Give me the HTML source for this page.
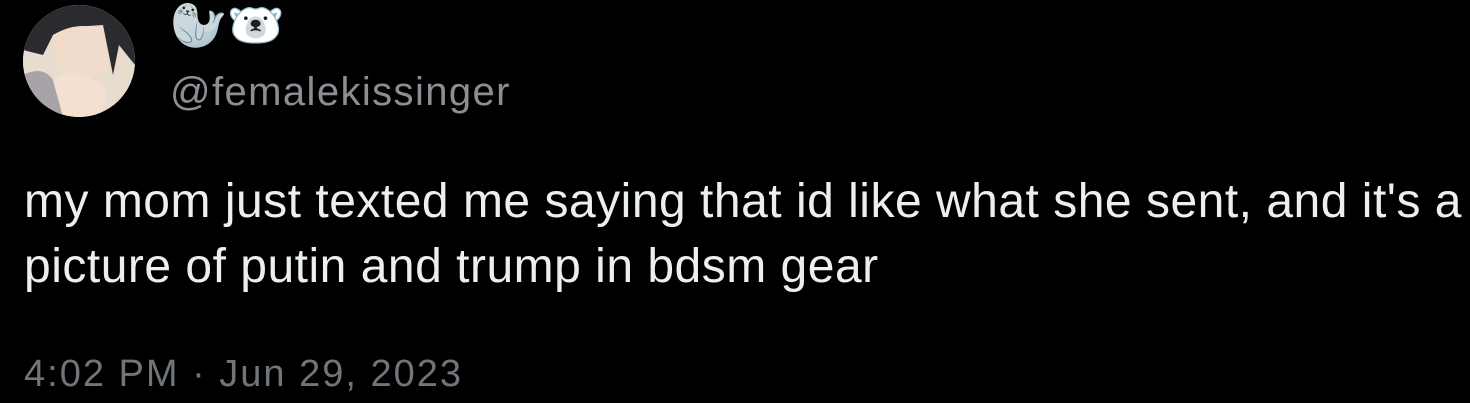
<!DOCTYPE html>
<html><head><style>
body{margin:0;width:1470px;height:403px;background:#000;overflow:hidden;font-family:"Liberation Sans",sans-serif;position:relative}
.av{position:absolute;left:23px;top:5px;width:112px;height:112px;border-radius:50%;overflow:hidden;background:#d9cfc6}
.t{position:absolute;white-space:nowrap;line-height:1.15}
</style></head><body>
<div class="av">
<svg width="112" height="112" viewBox="0 0 112 112">
<rect width="112" height="112" fill="#e8dccf"/>
<path d="M0 0H112V60L96 40 90 70 80 20 50 22 30 30 20 50 0 45Z" fill="#2b2a2e"/>
<path d="M30 30Q55 15 80 25L85 60Q70 80 50 75 30 60 30 30Z" fill="#f1dccb"/>
<path d="M0 70Q20 60 30 75L40 112H0Z" fill="#a8a3a8"/>
<path d="M30 75Q50 60 80 80 90 100 70 112H40Z" fill="#f3e0d0"/>
<path d="M0 90L15 100 10 112H0Z" fill="#6b2a3a"/>
</svg>
</div>
<div class="t" style="left:170px;top:2px;font-size:46px;line-height:1">🦭🐻‍❄️</div>
<div class="t" style="left:170px;top:69px;font-size:40px;color:#8b8f94;letter-spacing:1.4px">@femalekissinger</div>
<div class="t" style="left:24px;top:174px;font-size:48px;color:#eceff1;letter-spacing:0.5px">my mom just texted me saying that id like what she sent, and it's a</div>
<div class="t" style="left:24px;top:239px;font-size:48px;color:#eceff1;letter-spacing:0.5px">picture of putin and trump in bdsm gear</div>
<div class="t" style="left:24px;top:353px;font-size:38px;color:#6f757b;letter-spacing:2px">4:02 PM · Jun 29, 2023</div>
</body></html>
